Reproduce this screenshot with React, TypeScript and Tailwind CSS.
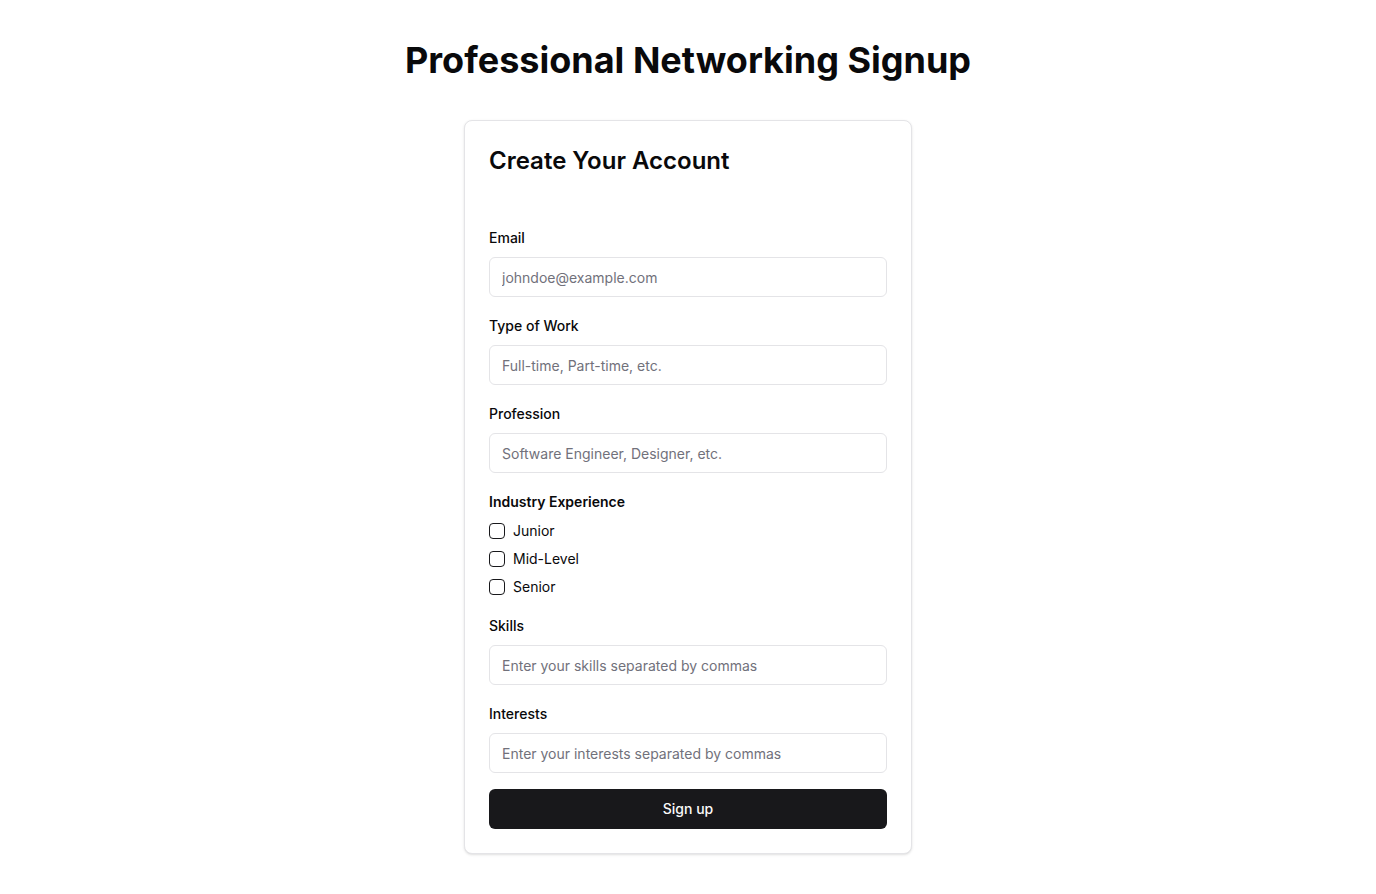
import { useState } from "react"

function Field({ label, placeholder }: { label: string; placeholder: string }) {
    return (
        <div className="flex flex-col">
            <label className="text-sm font-medium leading-5 text-zinc-950 mb-[9px]">{label}</label>
            <input
                type="text"
                placeholder={placeholder}
                className="h-10 w-full rounded-md border border-zinc-200 bg-white px-3 text-sm text-zinc-950 placeholder:text-zinc-500 outline-none"
            />
        </div>
    )
}

function Check({ label }: { label: string }) {
    const [on, setOn] = useState(false)
    return (
        <label className="flex items-center gap-2 h-5 cursor-pointer">
            <button
                type="button"
                onClick={() => setOn(!on)}
                className={`h-4 w-4 shrink-0 rounded-[4px] border border-zinc-900 ${on ? "bg-zinc-900" : "bg-white"}`}
            />
            <span className="text-sm text-zinc-950">{label}</span>
        </label>
    )
}

export default function App() {
    return (
        <div className="min-h-screen bg-white pt-10 pb-10" style={{ fontFamily: "Inter, 'Liberation Sans', sans-serif" }}>
            <h1 className="text-4xl font-bold text-center text-zinc-950 mb-10">Professional Networking Signup</h1>

            <div className="mx-auto w-[448px] rounded-lg border border-zinc-200 bg-white shadow-sm p-6">
                <h2 className="text-2xl font-semibold text-zinc-950 mb-[51px]">Create Your Account</h2>

                <form className="flex flex-col gap-[19px]" onSubmit={e => e.preventDefault()}>
                    <Field label="Email" placeholder="johndoe@example.com" />
                    <Field label="Type of Work" placeholder="Full-time, Part-time, etc." />
                    <Field label="Profession" placeholder="Software Engineer, Designer, etc." />

                    {/* Experience */}
                    <div className="flex flex-col">
                        <span className="text-sm font-semibold leading-5 text-zinc-950 mb-[9px]">Industry Experience</span>
                        <div className="flex flex-col gap-2">
                            <Check label="Junior" />
                            <Check label="Mid-Level" />
                            <Check label="Senior" />
                        </div>
                    </div>

                    <Field label="Skills" placeholder="Enter your skills separated by commas" />
                    <Field label="Interests" placeholder="Enter your interests separated by commas" />

                    <button type="submit" className="h-10 w-full rounded-md bg-zinc-900 text-sm font-medium text-zinc-50 -mt-[3px]">
                        Sign up
                    </button>
                </form>
            </div>
        </div>
    )
}
